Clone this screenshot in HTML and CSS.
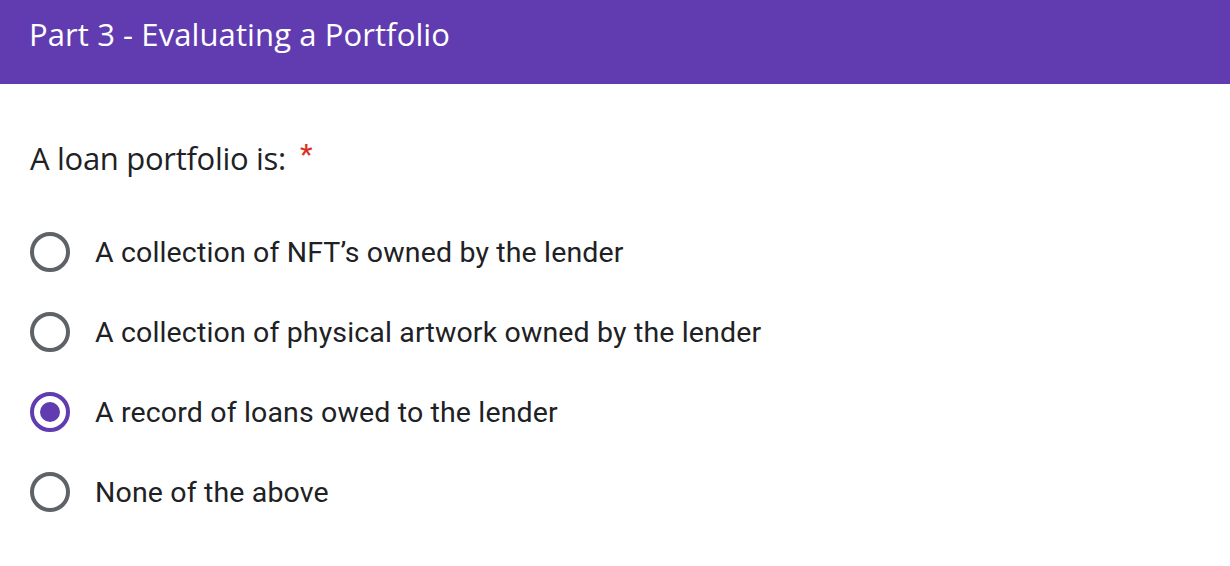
FILE: index.html
```html
<!DOCTYPE html>
<html>
<head>
<meta charset="utf-8">
<link rel="stylesheet" href="styles.css">
</head>
<body>
<header class="banner">
  <h1 class="banner-title">Part 3 - Evaluating a Portfolio</h1>
</header>
<main class="question">
  <div class="q-title">A loan portfolio is:<span class="req">*</span></div>
  <div class="options">
    <div class="option"><span class="radio"></span><span class="label">A collection of NFT’s owned by the lender</span></div>
    <div class="option"><span class="radio"></span><span class="label">A collection of physical artwork owned by the lender</span></div>
    <div class="option"><span class="radio checked"></span><span class="label">A record of loans owed to the lender</span></div>
    <div class="option"><span class="radio"></span><span class="label">None of the above</span></div>
  </div>
</main>
</body>
</html>
```
FILE: styles.css
```css
html, body { margin: 0; padding: 0; background: #fff; }
body { width: 1230px; height: 566px; overflow: hidden; }
.banner {
  height: 84px;
  background: #603cb0;
  box-sizing: border-box;
  padding: 14px 0 0 29px;
}
.banner-title {
  margin: 0;
  font-family: "Open Sans", sans-serif;
  font-weight: 400;
  font-size: 31px;
  line-height: 40px;
  color: #fff;
  letter-spacing: 0.1px;
}
.question { padding: 52px 0 0 30px; }
.q-title {
  height: 44px;
  font-family: "Open Sans", sans-serif;
  font-size: 31px;
  line-height: 44px;
  color: #202124;
  letter-spacing: -0.3px;
}
.req {
  color: #d93025;
  font-family: Roboto, sans-serif;
  font-weight: 500;
  font-size: 28px;
  line-height: 1;
  margin-left: 14px;
  vertical-align: 6px;
}
.options { margin-top: 32px; display: flex; flex-direction: column; }
.option { display: flex; align-items: center; height: 80px; }
.radio {
  width: 40px; height: 40px; box-sizing: border-box;
  border: 4px solid #5f6368; border-radius: 50%;
  display: flex; align-items: center; justify-content: center;
  flex: none;
}
.radio.checked { border-color: #603cb0; }
.radio.checked::after {
  content: ""; width: 20px; height: 20px; border-radius: 50%; background: #603cb0;
}
.label {
  margin-left: 25px;
  font-family: Roboto, sans-serif;
  font-size: 28.5px;
  color: #202124;
  letter-spacing: 0.15px;
}
```
